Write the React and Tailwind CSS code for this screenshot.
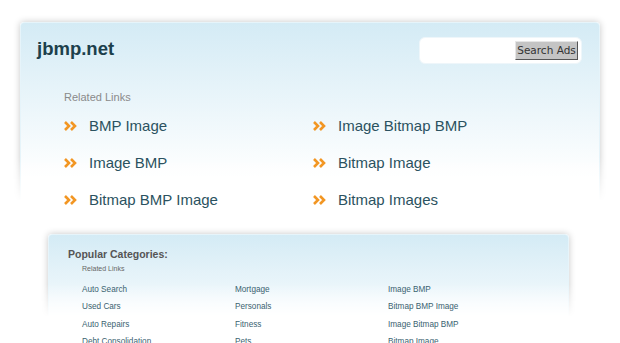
const topLinks = [
  ["BMP Image", "Image Bitmap BMP"],
  ["Image BMP", "Bitmap Image"],
  ["Bitmap BMP Image", "Bitmap Images"],
];

const categories = [
  ["Auto Search", "Mortgage", "Image BMP"],
  ["Used Cars", "Personals", "Bitmap BMP Image"],
  ["Auto Repairs", "Fitness", "Image Bitmap BMP"],
  ["Debt Consolidation", "Pets", "Bitmap Image"],
];

const Chevrons = () => (
  <svg width="13" height="10" viewBox="0 0 13 10" className="shrink-0">
    <path d="M1 1l4 4-4 4M7 1l4 4-4 4" fill="none" stroke="#f29623" strokeWidth="2.6" />
  </svg>
);

// card backdrop: blue top fading to white, edges fade out at the bottom
const CardBg = ({ fade }) => (
  <div
    className={`absolute -inset-[10px] p-[10px] pointer-events-none ${fade}`}
  >
    <div className="h-full rounded-[4px] border border-[#e6f4fa] bg-[linear-gradient(to_bottom,#d4ebf5,#ffffff_78%)] shadow-[0_0_7px_rgba(0,0,0,0.22)]" />
  </div>
);

const App = () => {
  return (
    <div className="w-[620px] h-[343px] overflow-hidden bg-white font-['Liberation_Sans',Arial,sans-serif]">
      <div className="relative ml-[20px] mt-[22px] w-[580px] h-[200px]">
        <CardBg fade="[mask-image:linear-gradient(to_bottom,#000_66%,transparent_86%)]" />
        <div className="relative pl-[17px] pr-[18px] pt-[14px]">
          <div className="flex justify-between items-start">
            <h1 className="text-[18.5px] leading-[24px] font-bold text-[#1c404c] mt-[1px]">
              jbmp.net
            </h1>
            <div className="mt-[1px] w-[163px] h-[27px] rounded-[6px] bg-white border border-[#eef6fa] flex items-center justify-end pr-[3px]">
              <button className="h-[19px] w-[63px] bg-[#c4c4c4] border border-t-[#e6e6e6] border-l-[#e6e6e6] border-r-[#555] border-b-[#555] text-[10.5px] leading-none text-[#333] font-['DejaVu_Sans',sans-serif]">
                Search Ads
              </button>
            </div>
          </div>
          <div className="mt-[26px] pl-[27px]">
            <p className="text-[11px] leading-[14px] text-[#8a8a8a]">Related Links</p>
            <div className="mt-[11px] grid grid-cols-[249px_1fr] gap-y-[15px]">
              {topLinks.flat().map((l) => (
                <a key={l} className="flex items-center gap-[12px] h-[22px] text-[15px] text-[#2b5260]">
                  <Chevrons />
                  <span>{l}</span>
                </a>
              ))}
            </div>
          </div>
        </div>
      </div>

      <div className="relative ml-[48px] mt-[12px] w-[521px] h-[130px]">
        <CardBg fade="[mask-image:linear-gradient(to_bottom,#000_40%,transparent_62%)]" />
        <div className="relative pl-[20px] pt-[13px]">
          <p className="text-[10.5px] leading-[14px] font-bold text-[#555]">Popular Categories:</p>
          <p className="ml-[14px] mt-[3px] text-[7px] leading-[9px] text-[#666]">Related Links</p>
          <div className="ml-[14px] mt-[11px] grid grid-cols-[153px_153px_1fr] gap-y-[5.4px]">
            {categories.flat().map((c, i) => (
              <a key={i} className="text-[8.2px] leading-[12px] text-[#3a6270]">
                {c}
              </a>
            ))}
          </div>
        </div>
      </div>
    </div>
  );
};

export default App;
